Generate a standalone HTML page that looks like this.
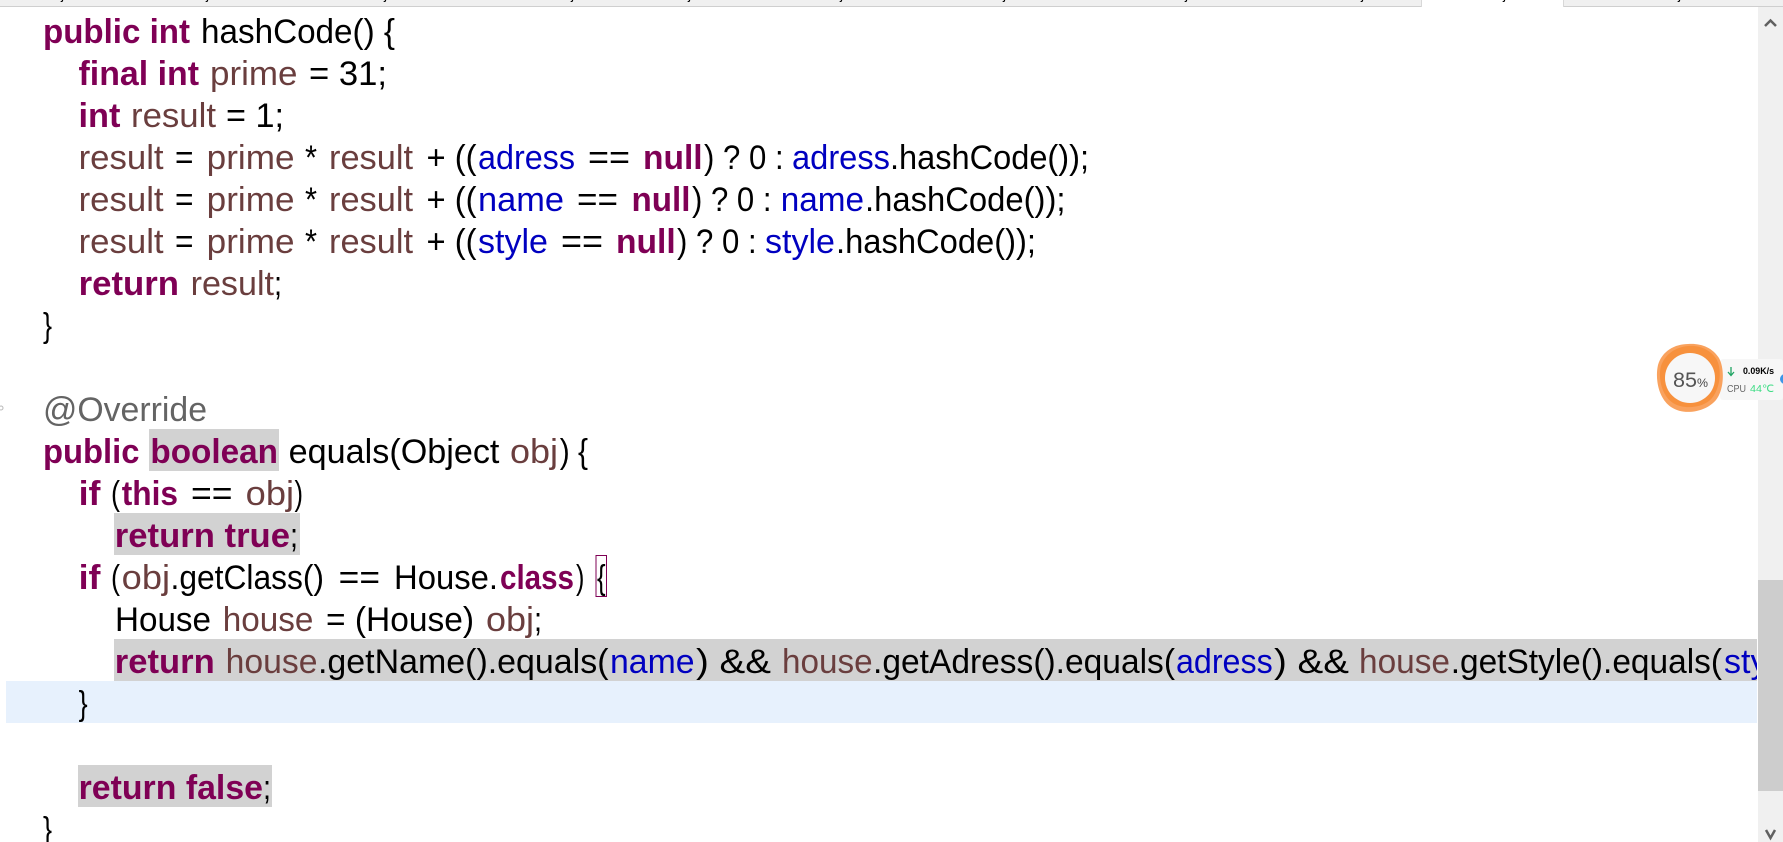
<!DOCTYPE html>
<html lang="en"><head><meta charset="utf-8"><title>House.java</title>
<style>
html,body{margin:0;padding:0;width:1783px;height:842px;overflow:hidden;background:#fff}
svg{position:absolute;left:0;top:0;display:block}
text{font-family:"Liberation Sans",sans-serif;font-size:34px;fill:#000;white-space:pre}
.k{font-weight:bold;fill:#7f0055}
.f{fill:#0000c0}
.v{fill:#6a3e3e}
.a{fill:#646464}
.w{font-size:8.5px}
</style></head><body>
<svg width="1783" height="842" viewBox="0 0 1783 842" xmlns="http://www.w3.org/2000/svg">
<defs><clipPath id="c"><rect x="0" y="0" width="1757" height="842"/></clipPath></defs>
<rect width="1783" height="842" fill="#fff"/>
<!-- tab strip -->
<rect x="0" y="0" width="1421" height="6" fill="#f0f0f0"/>
<rect x="0" y="6" width="1421" height="1" fill="#cfcfcf"/>
<rect x="1563" y="0" width="220" height="6" fill="#f0f0f0"/>
<rect x="1563" y="6" width="220" height="1" fill="#cfcfcf"/>
<rect x="1421" y="0" width="1" height="7" fill="#d8d8d8"/>
<rect x="1563" y="0" width="1" height="7" fill="#d8d8d8"/>
<g>
<text style="font-size:14px" x="61" y="-1">j</text><text style="font-size:14px" x="206" y="-1">j</text><text style="font-size:14px" x="384" y="-1">j</text><text style="font-size:14px" x="571" y="-1">j</text><text style="font-size:14px" x="688" y="-1">j</text><text style="font-size:14px" x="840" y="-1">j</text><text style="font-size:14px" x="1003" y="-1">j</text><text style="font-size:14px" x="1185" y="-1">j</text><text style="font-size:14px" x="1361" y="-1">j</text><text style="font-size:14px" x="1503" y="-1">j</text><text style="font-size:14px" x="1678" y="-1">j</text>
</g>
<!-- scrollbar -->
<rect x="1758" y="7" width="25" height="835" fill="#f0f0f0"/>
<rect x="1758" y="580" width="25" height="211" fill="#cdcdcd"/>
<path d="M1765 26 L1770.500 20.500 L1776 26" fill="none" stroke="#606060" stroke-width="2.500"/>
<path d="M1766 830 L1770.500 838 L1775 830" fill="none" stroke="#606060" stroke-width="2.500"/>
<!-- highlights -->
<rect x="6" y="681" width="1751" height="42" fill="#e7f1fd"/>
<rect x="149" y="429" width="130" height="42" fill="#d2d2d2"/>
<rect x="114" y="513" width="186" height="42" fill="#d2d2d2"/>
<rect x="114" y="639" width="1643" height="42" fill="#d2d2d2"/>
<rect x="78" y="765" width="194" height="42" fill="#d2d2d2"/>
<rect x="596" y="555.500" width="10.500" height="41" fill="none" stroke="#7f0055" stroke-width="1"/>
<circle cx="1" cy="408" r="2" fill="none" stroke="#b8b8b8" stroke-width="1"/>
<g clip-path="url(#c)"><g transform="translate(0,1)">
<!-- 0 -->
<text class="k" x="43" y="42" textLength="147" lengthAdjust="spacingAndGlyphs">public int</text>
<text x="201" y="42" textLength="194" lengthAdjust="spacingAndGlyphs">hashCode() {</text>
<!-- 1 -->
<text class="k" x="78.500" y="84" textLength="120.500" lengthAdjust="spacingAndGlyphs">final int</text>
<text class="v" x="210" y="84" textLength="87.500" lengthAdjust="spacingAndGlyphs">prime</text>
<text x="309" y="84" textLength="78" lengthAdjust="spacingAndGlyphs">= 31;</text>
<!-- 2 -->
<text class="k" x="78.500" y="126" textLength="42" lengthAdjust="spacingAndGlyphs">int</text>
<text class="v" x="131" y="126" textLength="85" lengthAdjust="spacingAndGlyphs">result</text>
<text x="226" y="126" textLength="58" lengthAdjust="spacingAndGlyphs">= 1;</text>
<!-- 3 -->
<text class="v" x="78.600" y="168" textLength="85" lengthAdjust="spacingAndGlyphs">result</text>
<text x="175" y="168" textLength="18.500" lengthAdjust="spacingAndGlyphs">=</text>
<text class="v" x="206.700" y="168" textLength="87.800" lengthAdjust="spacingAndGlyphs">prime</text>
<text x="305" y="168" textLength="12" lengthAdjust="spacingAndGlyphs">*</text>
<text class="v" x="329" y="168" textLength="84" lengthAdjust="spacingAndGlyphs">result</text>
<text x="426.500" y="168" textLength="50" lengthAdjust="spacingAndGlyphs">+ ((</text>
<text class="f" x="478" y="168" textLength="97" lengthAdjust="spacingAndGlyphs">adress</text>
<text x="588" y="168" textLength="42" lengthAdjust="spacingAndGlyphs">==</text>
<text class="k" x="643" y="168" textLength="59.600" lengthAdjust="spacingAndGlyphs">null</text>
<text x="704" y="168" textLength="79.600" lengthAdjust="spacingAndGlyphs">) ? 0 :</text>
<text class="f" x="792" y="168" textLength="98" lengthAdjust="spacingAndGlyphs">adress</text>
<text x="890" y="168" textLength="199" lengthAdjust="spacingAndGlyphs">.hashCode());</text>
<!-- 4 -->
<text class="v" x="78.600" y="210" textLength="85" lengthAdjust="spacingAndGlyphs">result</text>
<text x="175" y="210" textLength="18.500" lengthAdjust="spacingAndGlyphs">=</text>
<text class="v" x="206.700" y="210" textLength="87.800" lengthAdjust="spacingAndGlyphs">prime</text>
<text x="305" y="210" textLength="12" lengthAdjust="spacingAndGlyphs">*</text>
<text class="v" x="329" y="210" textLength="84" lengthAdjust="spacingAndGlyphs">result</text>
<text x="426.500" y="210" textLength="50" lengthAdjust="spacingAndGlyphs">+ ((</text>
<text class="f" x="478" y="210" textLength="86" lengthAdjust="spacingAndGlyphs">name</text>
<text x="577" y="210" textLength="41" lengthAdjust="spacingAndGlyphs">==</text>
<text class="k" x="631.500" y="210" textLength="59" lengthAdjust="spacingAndGlyphs">null</text>
<text x="692" y="210" textLength="79.500" lengthAdjust="spacingAndGlyphs">) ? 0 :</text>
<text class="f" x="780.700" y="210" textLength="83.300" lengthAdjust="spacingAndGlyphs">name</text>
<text x="865" y="210" textLength="200.500" lengthAdjust="spacingAndGlyphs">.hashCode());</text>
<!-- 5 -->
<text class="v" x="78.600" y="252" textLength="85" lengthAdjust="spacingAndGlyphs">result</text>
<text x="175" y="252" textLength="18.500" lengthAdjust="spacingAndGlyphs">=</text>
<text class="v" x="206.700" y="252" textLength="87.800" lengthAdjust="spacingAndGlyphs">prime</text>
<text x="305" y="252" textLength="12" lengthAdjust="spacingAndGlyphs">*</text>
<text class="v" x="329" y="252" textLength="84" lengthAdjust="spacingAndGlyphs">result</text>
<text x="426.500" y="252" textLength="50" lengthAdjust="spacingAndGlyphs">+ ((</text>
<text class="f" x="478" y="252" textLength="70" lengthAdjust="spacingAndGlyphs">style</text>
<text x="561" y="252" textLength="42" lengthAdjust="spacingAndGlyphs">==</text>
<text class="k" x="616" y="252" textLength="59.700" lengthAdjust="spacingAndGlyphs">null</text>
<text x="677" y="252" textLength="79.600" lengthAdjust="spacingAndGlyphs">) ? 0 :</text>
<text class="f" x="765" y="252" textLength="70" lengthAdjust="spacingAndGlyphs">style</text>
<text x="836" y="252" textLength="200" lengthAdjust="spacingAndGlyphs">.hashCode());</text>
<!-- 6 -->
<text class="k" x="78.600" y="294" textLength="100.400" lengthAdjust="spacingAndGlyphs">return</text>
<text class="v" x="190.600" y="294" textLength="83.400" lengthAdjust="spacingAndGlyphs">result</text>
<text x="274" y="294" textLength="8" lengthAdjust="spacingAndGlyphs">;</text>
<!-- 7 -->
<text x="43" y="336" textLength="9" lengthAdjust="spacingAndGlyphs">}</text>
<!-- 9 -->
<text class="a" x="43" y="420" textLength="164" lengthAdjust="spacingAndGlyphs">@Override</text>
<!-- 10 -->
<text class="k" x="43" y="462" textLength="96.500" lengthAdjust="spacingAndGlyphs">public</text>
<text class="k" x="150.400" y="462" textLength="127.600" lengthAdjust="spacingAndGlyphs">boolean</text>
<text x="288.700" y="462" textLength="210.700" lengthAdjust="spacingAndGlyphs">equals(Object</text>
<text class="v" x="510" y="462" textLength="48" lengthAdjust="spacingAndGlyphs">obj</text>
<text x="559.700" y="462" textLength="28.300" lengthAdjust="spacingAndGlyphs">) {</text>
<!-- 11 -->
<text class="k" x="78.600" y="504" textLength="21.900" lengthAdjust="spacingAndGlyphs">if</text>
<text x="111" y="504" textLength="9" lengthAdjust="spacingAndGlyphs">(</text>
<text class="k" x="121.700" y="504" textLength="56.300" lengthAdjust="spacingAndGlyphs">this</text>
<text x="191" y="504" textLength="41.500" lengthAdjust="spacingAndGlyphs">==</text>
<text class="v" x="245.700" y="504" textLength="48.300" lengthAdjust="spacingAndGlyphs">obj</text>
<text x="294.500" y="504" textLength="8.500" lengthAdjust="spacingAndGlyphs">)</text>
<!-- 12 -->
<text class="k" x="114.800" y="546" textLength="175.200" lengthAdjust="spacingAndGlyphs">return true</text>
<text x="290" y="546" textLength="8" lengthAdjust="spacingAndGlyphs">;</text>
<!-- 13 -->
<text class="k" x="78.600" y="588" textLength="21.900" lengthAdjust="spacingAndGlyphs">if</text>
<text x="111" y="588" textLength="9" lengthAdjust="spacingAndGlyphs">(</text>
<text class="v" x="121.700" y="588" textLength="48.300" lengthAdjust="spacingAndGlyphs">obj</text>
<text x="170.500" y="588" textLength="153.500" lengthAdjust="spacingAndGlyphs">.getClass()</text>
<text x="338.700" y="588" textLength="41.300" lengthAdjust="spacingAndGlyphs">==</text>
<text x="394" y="588" textLength="104" lengthAdjust="spacingAndGlyphs">House.</text>
<text class="k" x="500" y="588" textLength="74" lengthAdjust="spacingAndGlyphs">class</text>
<text x="576" y="588" textLength="8.400" lengthAdjust="spacingAndGlyphs">)</text>
<text x="597" y="588" textLength="8.600" lengthAdjust="spacingAndGlyphs">{</text>
<!-- 14 -->
<text x="115" y="630" textLength="96" lengthAdjust="spacingAndGlyphs">House</text>
<text class="v" x="222.700" y="630" textLength="90.700" lengthAdjust="spacingAndGlyphs">house</text>
<text x="326" y="630" textLength="148" lengthAdjust="spacingAndGlyphs">= (House)</text>
<text class="v" x="486" y="630" textLength="48" lengthAdjust="spacingAndGlyphs">obj</text>
<text x="534" y="630" textLength="8" lengthAdjust="spacingAndGlyphs">;</text>
<!-- 15 -->
<text class="k" x="114.800" y="672" textLength="99.900" lengthAdjust="spacingAndGlyphs">return</text>
<text class="v" x="225.600" y="672" textLength="91.900" lengthAdjust="spacingAndGlyphs">house</text>
<text x="318" y="672" textLength="290.500" lengthAdjust="spacingAndGlyphs">.getName().equals(</text>
<text class="f" x="610" y="672" textLength="84.600" lengthAdjust="spacingAndGlyphs">name</text>
<text x="696" y="672" textLength="75" lengthAdjust="spacingAndGlyphs">) &amp;&amp;</text>
<text class="v" x="782" y="672" textLength="90.600" lengthAdjust="spacingAndGlyphs">house</text>
<text x="873" y="672" textLength="302" lengthAdjust="spacingAndGlyphs">.getAdress().equals(</text>
<text class="f" x="1176" y="672" textLength="96.700" lengthAdjust="spacingAndGlyphs">adress</text>
<text x="1274" y="672" textLength="75" lengthAdjust="spacingAndGlyphs">) &amp;&amp;</text>
<text class="v" x="1359" y="672" textLength="91" lengthAdjust="spacingAndGlyphs">house</text>
<text x="1450.700" y="672" textLength="271.300" lengthAdjust="spacingAndGlyphs">.getStyle().equals(</text>
<text class="f" x="1724" y="672" textLength="70" lengthAdjust="spacingAndGlyphs">style</text>
<!-- 16 -->
<text x="78.600" y="714" textLength="9" lengthAdjust="spacingAndGlyphs">}</text>
<!-- 18 -->
<text class="k" x="78.600" y="798" textLength="184.400" lengthAdjust="spacingAndGlyphs">return false</text>
<text x="263" y="798" textLength="8" lengthAdjust="spacingAndGlyphs">;</text>
<!-- 19 -->
<text x="43" y="840" textLength="9" lengthAdjust="spacingAndGlyphs">}</text>
</g></g>
<!-- system monitor widget -->
<rect x="1720" y="359" width="63" height="41" rx="3" fill="#f7f7f7"/>
<path d="M1688 344 C1700 343 1712 347 1719 358 C1725 369 1724 390 1716 400 C1706 412 1684 416 1671 407 C1658 398 1655 378 1658 365 C1662 351 1675 344 1688 344Z" fill="#f9a25e"/>
<path d="M1688 346 C1700 345 1711 350 1717 360 C1722 371 1720 388 1712 398 C1704 408 1684 410 1673 403 C1661 395 1658 377 1661 366 C1665 354 1676 347 1688 346Z" fill="#f7913d"/>
<circle cx="1690" cy="378" r="25" fill="#f7f7f7"/>
<text x="1673" y="387" textLength="24" lengthAdjust="spacingAndGlyphs" style="font-size:21px;fill:#555">85</text>
<text x="1697" y="387" textLength="11" lengthAdjust="spacingAndGlyphs" style="font-size:12px;fill:#444">%</text>
<path d="M1731 367 V375 M1728 372 L1731 375.500 L1734 372" fill="none" stroke="#1fa463" stroke-width="1.300"/>
<text class="w" x="1743" y="374" textLength="31" lengthAdjust="spacingAndGlyphs" style="font-size:9px;font-weight:bold">0.09K/s</text>
<text x="1727" y="392" textLength="19" lengthAdjust="spacingAndGlyphs" style="font-size:10px;fill:#666">CPU</text>
<text x="1750" y="392" textLength="24" lengthAdjust="spacingAndGlyphs" style="font-size:10px;fill:#3ddc84">44℃</text>
<circle cx="1785" cy="379" r="5" fill="#3d95e8"/>
</svg>
</body></html>
